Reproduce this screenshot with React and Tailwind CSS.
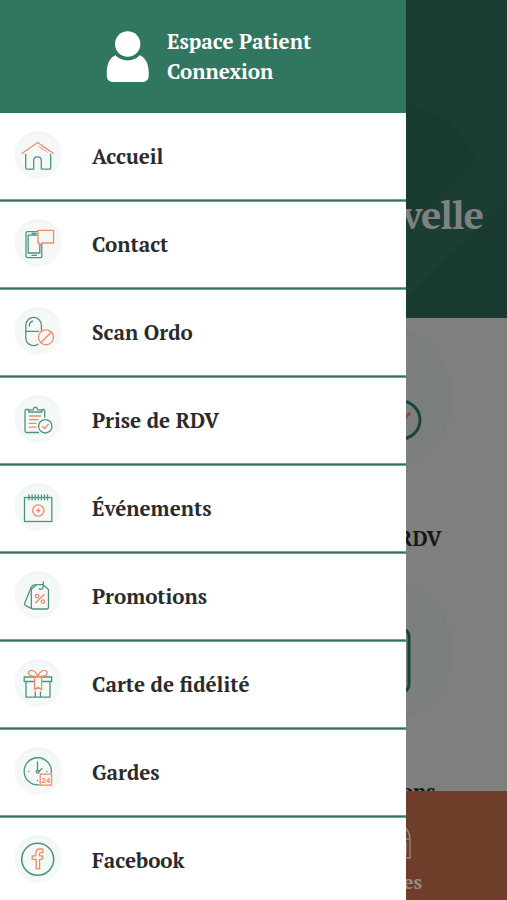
import React from "react";

const GREEN = "#4d947f";
const ORANGE = "#f08a68";

const IconCircle = ({ children }) => (
    <svg viewBox="0 0 48 48" className="w-12 h-12 shrink-0" fill="none" strokeWidth="1.3" stroke={GREEN} strokeLinecap="round" strokeLinejoin="round">
        <circle cx="24" cy="24" r="23.8" fill="#f4f9f8" stroke="none" />
        <path d="M5 11A23.3 23.3 0 0 1 43 11" stroke="#e8eeed" strokeWidth="0.8" />
        {children}
    </svg>
);

const HomeIcon = () => (
    <IconCircle>
        <path d="M11.7 23.5v13.6a1 1 0 0 0 1 1h7V29a3.4 3.4 0 0 1 3.4-3.2h1.2a3.4 3.4 0 0 1 3 3.2v9.1h8.4a1 1 0 0 0 1-1V23.5" />
        <path stroke={ORANGE} d="M8.2 22.3 23.7 11.4l15.5 10.9" strokeWidth="1.2" />
        <path stroke={ORANGE} d="m24.8 15.2 8.4 6M27.6 14.6l7.8 5.3" strokeWidth="0.9" />
    </IconCircle>
);

const ContactIcon = () => (
    <IconCircle>
        <rect x="12" y="12.7" width="15.8" height="26" rx="1.6" />
        <path d="M27 16.2H14.2v17.8h11.6V26M18 14.5h4M18 36.4h4.5" />
        <path stroke={ORANGE} fill="#f4f9f8" d="M24 11.3h15.6V24H28l-2.8 2.7V24H24z" />
    </IconCircle>
);

const PillIcon = () => (
    <IconCircle>
        <path d="M24 37.2a7.8 7.8 0 0 1-12.2-6.5V18.2a7.8 7.8 0 0 1 15.6 0v5M11.8 24.3h13M15.3 19c0-2.4 1.1-4 3.3-4.8" />
        <circle cx="32" cy="30.3" r="7.5" stroke={ORANGE} />
        <path stroke={ORANGE} d="m27.3 35.2 9.6-9.7" />
    </IconCircle>
);

const ClipboardIcon = () => (
    <IconCircle>
        <path d="M14.5 14.5h-2A1.5 1.5 0 0 0 11 16v20a1.5 1.5 0 0 0 1.5 1.5h12M28.500 14.5h.7a1.500 1.500 0 0 1 1.500 1.500v6M14.800 17v-2.200h4.400c.4-1.900 1.100-2.700 2.200-2.700s1.800.8 2.200 2.700H28V17z" />
        <path stroke={ORANGE} d="M15.300 21h11.400M15.300 24.700H24M15.300 28.400h6.700M15.300 32.200h6.700" />
        <circle cx="31.300" cy="31.300" r="6.700" />
        <path stroke={ORANGE} d="m28.500 31.500 2.100 2 3.600-4" />
    </IconCircle>
);

const CalendarIcon = () => (
    <IconCircle>
        <rect x="10.5" y="14.5" width="27.3" height="24" strokeLinejoin="miter" />
        <path d="M15 11.8v5M18.1 11.8v5M21.2 11.8v5M24.3 11.8v5M27.4 11.8v5M30.5 11.8v5M33.6 11.8v5" />
        <circle cx="24.3" cy="27.5" r="5.6" stroke={ORANGE} />
        <path stroke={ORANGE} d="M24.3 26v3M22.8 27.5h3" />
    </IconCircle>
);

const TagIcon = () => (
    <IconCircle>
        <path d="M17.3 19v17a2 2 0 0 0 2 2h13.2a2 2 0 0 0 2-2V19.2a2 2 0 0 0-.8-1.5l-4.600-4h-6.400l-4.600 3.800a2 2 0 0 0-.8 1.500z" />
        <path d="M22 13.400c-2 .2-3.700 1-4.800 2.800L10.600 32.600c-.3.8 0 1.300.6 1.700l6.100 3.100M25.400 17.800c1 .8 2.500.7 3.200-.4.600-1 .8-3.600.7-6.400" />
        <g stroke={ORANGE}>
            <path d="m30 23.800-8.400 8" />
            <circle cx="23" cy="25.200" r="1.700" />
            <circle cx="29" cy="30.500" r="1.700" />
        </g>
    </IconCircle>
);

const GiftIcon = () => (
    <IconCircle>
        <path d="M20.3 22.5H10.2V18h27.500v4.500H27.700M12 22.500v15.700h24V22.500M21.300 33v5M26.500 33v5" />
        <path stroke={ORANGE} fill="#f4f9f8" d="M20.600 18h7v12.800l-3.500-2.500-3.500 2.500z" />
        <path stroke={ORANGE} d="M23.700 17.600c-1.200-4-3.800-6.300-6.500-6.300-2.200 0-3.400 2-2.600 3.800.8 1.900 4 2.500 9.100 2.500zM23.900 17.600c1.200-4 3.800-6.300 6.500-6.300 2.200 0 3.400 2 2.600 3.800-.8 1.900-4 2.500-9.100 2.500z" />
    </IconCircle>
);

const ClockIcon = () => (
    <IconCircle>
        <path d="M25 37.9A13.6 13.6 0 1 1 37.3 25.5M23.5 15v8M25 24.3l3-2.8M14.6 24.3h.4M32.5 24.3h.4M23.6 33.5v.2" />
        <circle cx="23.7" cy="24.7" r="1.4" />
        <rect x="26.2" y="27.2" width="11.4" height="11" stroke={ORANGE} strokeWidth="1.2" />
        <text x="31.9" y="36" textAnchor="middle" fontSize="8" fontWeight="bold" fontFamily="Liberation Sans, sans-serif" fill={ORANGE} stroke="none">24</text>
    </IconCircle>
);

const FacebookIcon = () => (
    <IconCircle>
        <circle cx="23.7" cy="24.3" r="16" strokeWidth="1.5" />
        <path stroke={ORANGE} d="M22.2 33.8v-9.400h-4v-3.600h3.600v-2.200c0-3 1.800-4.600 4.600-4.600h2.400v3.600h-1.600c-1.200 0-1.800.6-1.800 1.800v1.400h3.200l-.5 3.600h-2.500v9.400z" />
    </IconCircle>
);

const menuItems = [
    { label: "Accueil", icon: HomeIcon },
    { label: "Contact", icon: ContactIcon },
    { label: "Scan Ordo", icon: PillIcon },
    { label: "Prise de RDV", icon: ClipboardIcon },
    { label: "Événements", icon: CalendarIcon },
    { label: "Promotions", icon: TagIcon },
    { label: "Carte de fidélité", icon: GiftIcon },
    { label: "Gardes", icon: ClockIcon },
    { label: "Facebook", icon: FacebookIcon },
];

const Drawer = () => (
    <aside className="absolute inset-y-0 left-0 w-[406px] flex flex-col overflow-hidden bg-white">
        <div className="h-[113px] shrink-0 flex items-center bg-[#317660] pl-[106px] gap-[18px] text-white">
            <svg viewBox="0 0 43 52" className="w-[43px] h-[52px]" fill="currentColor">
                <circle cx="21.7" cy="13" r="12.7" />
                <path d="M9.5 24.2c3 3.2 7.3 5.2 12.2 5.2s9.2-2 12-5.2c5.4 2.2 9 8.3 9 16.8v3.5c0 4.2-2.4 6.5-6.5 6.5H7.3C3.2 51 .8 48.7.8 44.5V41c0-8.5 3.500-14.600 8.700-16.800z" />
            </svg>
            <div className="pt-px font-bold text-[20.6px] leading-[30px] whitespace-nowrap">
                <div>Espace Patient</div>
                <div>Connexion</div>
            </div>
        </div>
        <nav className="flex flex-col pt-px">
            {menuItems.map(({ label, icon: Icon }) => (
                <a key={label} className="h-[88px] shrink-0 flex flex-col">
                    <div className="flex-1 flex items-center pl-[14px] gap-[30px]">
                        <div className="-mt-[3px]"><Icon /></div>
                        <span className="pt-px font-bold text-[20.6px] leading-8 text-[#2b2b2b] whitespace-nowrap">{label}</span>
                    </div>
                    <div className="h-[3px] bg-[#2f745e] border-y border-[#6fa593]"></div>
                </a>
            ))}
        </nav>
    </aside>
);

const Tile = ({ label, children }) => (
    <div className="h-[253px] w-[254px] shrink-0 flex flex-col items-center pt-2">
        <svg viewBox="0 0 144 144" className="w-36 h-36 shrink-0" fill="none" stroke="#1b4637" strokeWidth="3">
            <circle cx="72" cy="72" r="71" fill="#7b807f" stroke="#797e7d" strokeWidth="2" />
            {children}
        </svg>
        <span className="mt-[53px] pr-1 text-[20.6px] leading-8 font-bold text-[#161616] whitespace-nowrap">{label}</span>
    </div>
);

const Page = () => (
    <main className="h-full flex flex-col">
        <header className="h-[318px] shrink-0 relative overflow-hidden bg-[#1b3d33] flex items-end justify-end pr-6 pb-[81px]">
            <svg viewBox="0 0 101 318" className="absolute right-0 top-0 w-[101px] h-[318px]">
                <path d="M0 102 45 122 71 158 0 229z" fill="#193a30" />
                <path d="M101 201v117H0v-20z" fill="#193a30" />
            </svg>
            <h1 className="relative font-bold text-[38px] leading-[44px] tracking-[-1px] text-[#7f8281]">Nouvelle</h1>
        </header>
        <section className="flex-1 min-h-0 overflow-hidden flex flex-col items-end bg-[#7f7f7f]">
            <Tile label="Prise de RDV">
                <circle cx="93" cy="94" r="19" />
                <path d="m84 93 6 6 12-12" stroke="#8a4a30" />
            </Tile>
            <Tile label="Promotions">
                <rect x="47" y="50" width="54" height="63" rx="7" />
            </Tile>
        </section>
        <footer className="h-[109px] shrink-0 flex justify-end bg-[#6f3e2a] text-[#958b86]">
            <div className="w-[170px] pr-[85px] flex flex-col items-end pt-[31px]">
                <svg viewBox="0 0 36 38" className="w-9 h-[38px] mr-[11px]" fill="none" stroke="currentColor" strokeWidth="1.3">
                    <path d="M24 17V2c6 1 11 8 11 15v19H4V17h31M23 21h8v11h-8z" />
                </svg>
                <span className="mt-[6px] text-[19px] leading-8 font-bold">Gardes</span>
            </div>
        </footer>
    </main>
);

const App = () => (
    <div className="relative w-[507px] h-[900px] overflow-hidden font-['PT_Serif','Liberation_Serif',serif]">
        <Page />
        <Drawer />
    </div>
);

export default App;
